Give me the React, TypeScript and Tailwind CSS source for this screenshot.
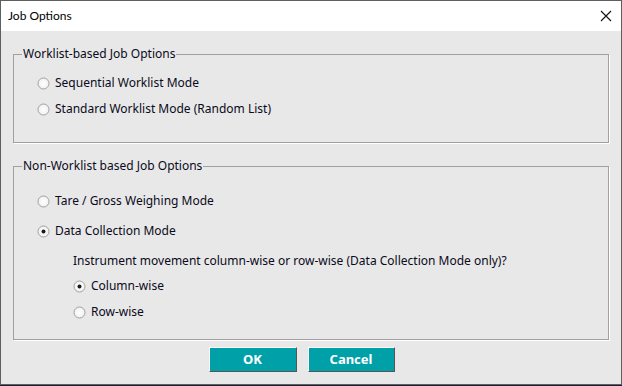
import React from 'react';

function Radio({ checked }: { checked?: boolean }) {
  return (
    <svg width="13" height="13" viewBox="0 0 13 13" className="shrink-0">
      <defs>
        <radialGradient id="rg" cx="50%" cy="50%" r="50%">
          <stop offset="0%" stopColor="#ffffff" />
          <stop offset="100%" stopColor="#f0f0f0" />
        </radialGradient>
      </defs>
      <circle cx="6.5" cy="6.5" r="5.5" fill="url(#rg)" stroke="#a0a0a0" strokeWidth="1" />
      {checked && <circle cx="6.5" cy="6.5" r="2" fill="#1a1a1a" />}
    </svg>
  );
}

function Option({ label, checked }: { label: string; checked?: boolean }) {
  return (
    <div className="flex h-[26px] items-center gap-[5px]">
      <Radio checked={checked} />
      <span>{label}</span>
    </div>
  );
}

export default function App() {
  return (
    <div className="h-[386px] w-[622px] bg-[#1e1e3c]">
      <div
        className="flex h-[385px] w-[622px] flex-col border border-[#5f5f5f] bg-[#e8e8e8] text-[12px] text-[#0a0a20]"
        style={{ fontFamily: '"Noto Sans", "Open Sans", sans-serif' }}
      >
        {/* Title bar */}
        <div className="flex h-[30px] shrink-0 items-center justify-between bg-white pl-[7px] pr-[9px]">
          <span className="text-[12px] text-black" style={{ fontFamily: 'Lato, sans-serif' }}>
            Job Options
          </span>
          <svg width="12" height="12" viewBox="0 0 12 12">
            <path d="M1 1 L11 11 M11 1 L1 11" stroke="#111" strokeWidth="1.1" />
          </svg>
        </div>

        <div className="flex flex-col px-[12px] pt-[14px]">
          {/* Worklist group */}
          <fieldset className="border border-[#a0a0a0] pb-[20px] pt-[7px] shadow-[1px_1px_0_#ffffff]">
            <legend className="ml-[8px] px-[1px]">Worklist-based Job Options</legend>
            <div className="pl-[23px]">
              <Option label="Sequential Worklist Mode" />
              <Option label="Standard Worklist Mode (Random List)" />
            </div>
          </fieldset>

          {/* Non-worklist group */}
          <fieldset className="mt-[14px] border border-[#a0a0a0] pb-[14px] pt-[13px] shadow-[1px_1px_0_#ffffff]">
            <legend className="ml-[8px] px-[1px]">Non-Worklist based Job Options</legend>
            <div className="pl-[23px]">
              <Option label="Tare / Gross Weighing Mode" />
              <div className="mt-[4px]">
                <Option label="Data Collection Mode" checked />
              </div>
              <div className="pl-[36px]">
                <div className="mt-[4px] flex h-[25px] items-center">
                  Instrument movement column-wise or row-wise (Data Collection Mode only)?
                </div>
                <Option label="Column-wise" checked />
                <Option label="Row-wise" />
              </div>
            </div>
          </fieldset>

          {/* Buttons */}
          <div className="mt-[7px] flex justify-center gap-[11px] pr-[19px]">
            <button className="h-[25px] w-[88px] border border-b-[#555] border-l-white border-r-[#555] border-t-white bg-[#00a0a8] text-[13px] font-bold text-white">
              OK
            </button>
            <button className="h-[25px] w-[87px] border border-b-[#555] border-l-white border-r-[#555] border-t-white bg-[#00a0a8] text-[13px] font-bold text-white">
              Cancel
            </button>
          </div>
        </div>
      </div>
    </div>
  );
}
